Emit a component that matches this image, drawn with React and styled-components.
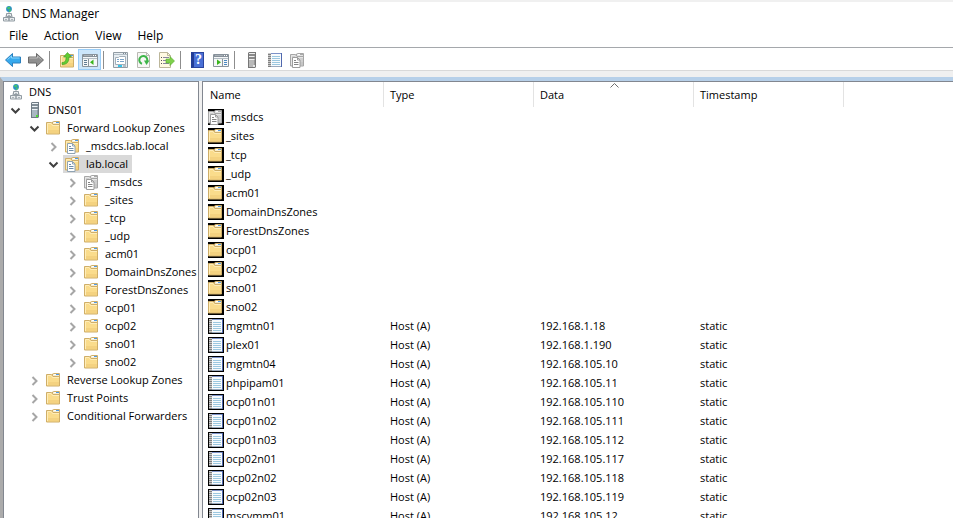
import React from "react";
import styled, { createGlobalStyle, css } from "styled-components";

const GlobalStyle = createGlobalStyle`
  * {
    box-sizing: border-box;
  }
  body {
    margin: 0;
    background: #fff;
    color: #000;
    font-family: "Open Sans", "Noto Sans", sans-serif;
    font-size: 11px;
    line-height: 16px;
  }
  button {
    margin: 0;
    padding: 0;
    border: 0;
    background: none;
    color: inherit;
    font: inherit;
  }
  svg {
    display: block;
    flex: none;
  }
`;

const Window = styled.div`
  display: flex;
  flex-direction: column;
  height: 100vh;
  overflow: hidden;
`;

const TitleBar = styled.header`
  display: flex;
  align-items: center;
  gap: 5px;
  height: 26px;
  padding-left: 1px;
  border-top: 2px solid #f0f0f0;
`;

const Title = styled.h1`
  margin: 0;
  font-size: 12px;
  font-weight: 400;
`;

const MenuBar = styled.nav`
  display: flex;
  height: 21px;
  padding-left: 1px;
  font-size: 12px;
`;

const MenuButton = styled.button`
  padding: 0 8px 2px;
`;

const ToolBar = styled.div`
  display: flex;
  align-items: center;
  height: 24px;
  padding: 1px 0 0 1px;
  border-top: 1px solid #a5a8ac;
  border-bottom: 1px solid #d9d9d9;
`;

const ToolButton = styled.button`
  display: flex;
  align-items: center;
  justify-content: center;
  width: 23px;
  height: 21px;
  ${({ $active }) =>
    $active &&
    css`
      border: 1px solid #99cdf8;
      background: #cce6fb;
    `}
`;

const Separator = styled.span`
  width: 1px;
  height: 18px;
  margin: 0 5px 0 2px;
  background: #8d8d8d;
`;

const Workspace = styled.div`
  flex: 1;
  min-height: 0;
  display: flex;
  flex-direction: column;
  padding-top: 6px;
  background: #f0f0f0;
`;

const Panes = styled.main`
  flex: 1;
  min-height: 0;
  display: grid;
  grid-template-columns: 196px 1fr;
  column-gap: 3px;
  border-top: 4px solid #b7d0e9;
  border-left: 3px solid #ababab;
`;

const Pane = styled.section`
  min-width: 0;
  overflow: hidden;
  border: 1px solid #828790;
  border-width: 1px 0 0 1px;
  background: #fff;
`;

const TreePane = styled(Pane)`
  padding-top: 1px;
  border-right-width: 1px;
`;

const Tree = styled.ul`
  margin: 0;
  padding: 0;
  list-style: none;
`;

const TreeRow = styled.div`
  display: flex;
  height: 18px;
  padding-left: ${({ $level }) => ($level ? $level * 19 - 15 : 2)}px;
`;

const Toggle = styled.button`
  display: flex;
  flex: none;
  align-items: center;
  width: 17px;
`;

const TreeItem = styled.button`
  display: flex;
  flex: none;
  align-items: center;
  gap: 5px;
  padding: 0 4px 0 2px;
  white-space: nowrap;
  background: ${({ $selected }) => ($selected ? "#d9d9d9" : "none")};
`;

const RecordTable = styled.table`
  width: 100%;
  table-layout: fixed;
  border-collapse: separate;
  border-spacing: 0;
`;

const HeadCell = styled.th`
  position: relative;
  width: ${({ $width }) => ($width ? `${$width}px` : "auto")};
  height: 25px;
  padding: 0 6px;
  border-right: ${({ $width }) => ($width ? "1px solid #e3e3e3" : "0")};
  font-weight: 400;
  text-align: left;

  &:first-child {
    padding-left: 7px;
  }
`;

const SortMark = styled.svg`
  position: absolute;
  top: 1px;
  left: calc(50% - 4px);
`;

const Cell = styled.td`
  height: 19px;
  padding: 0 6px;
  white-space: nowrap;

  &:first-child {
    padding-left: 5px;
  }
`;

const RecordName = styled.div`
  display: flex;
  align-items: center;
  gap: 2px;
`;

const IconTile = styled.span`
  width: 16px;
  height: 16px;
  background: #000;
`;

function Icon({ children }) {
  return (
    <svg width="16" height="16" viewBox="0 0 16 16" aria-hidden="true">
      {children}
    </svg>
  );
}

function DnsIcon() {
  return (
    <Icon>
      <path d="M8 6v3M5 11V9.500h6V11" fill="none" stroke="#9aa3a8" />
      <circle cx="8" cy="3" r="2.9" fill="#2a8fc4" />
      <path d="M6 1.500 8.500.5l1 1.500L8 3.500 6.500 3zM8 4l2.400-.8-.8 2L8 6z" fill="#46c46a" />
      <path d="M5.500 7.500h5v3h-5z" fill="#e8ebed" stroke="#929ca3" />
      <path d="M2.500 11.500H8V15H2.500zM8 11.500h5.500V15H8z" fill="#e8ebed" stroke="#929ca3" />
      <path d="M4 13.500h2M10 13.500h2M7 9.500h2" stroke="#a9b2b8" />
    </Icon>
  );
}

function ServerIcon({ gray }) {
  return (
    <Icon>
      <path d="M4 1 5 0h7v15l-1 1H4z" fill={gray ? "#777" : "#6f7b84"} />
      <path d="M5 1h5.500v14H5z" fill={gray ? "#b9b9b9" : "#a9b8c2"} />
      <path d="M5 1.500h6M5 4.500h5.500M5 7.500h5.500" stroke={gray ? "#eee" : "#edf3f6"} />
      <path d="M5 3h5.500M5 6h5.500" stroke={gray ? "#5a5a5a" : "#59636a"} />
      <path d="M9 13h2v2H9z" fill={gray ? "#e4e4e4" : "#4bdc2f"} />
    </Icon>
  );
}

function FolderShape({ gray }) {
  const edge = gray ? "#a6a6a6" : "#cfae68";
  return (
    <>
      <path d="M6.500 4V2l1-.5h6V5" fill={gray ? "#e4e4e4" : "#f5ecd0"} stroke={edge} />
      <path d="M8 2.500h2" stroke="#fff" />
      <path d="M10 2.500h3" stroke={gray ? "#aaa" : "#4f9be8"} />
      <path d="M.5 2.500h5l1.500 2h6.500v9.500H.5z" fill={gray ? "#cfcfcf" : "#fadc8c"} stroke={edge} />
      <path d="M1.500 13V3.500H5L6.500 5.500H13" fill="none" stroke={gray ? "#e6e6e6" : "#ffedb8"} />
      <path d="M2 10h11v3.500H2z" fill={gray ? "#bdbdbd" : "#eec873"} opacity=".5" />
    </>
  );
}

function FolderIcon() {
  return (
    <Icon>
      <FolderShape />
    </Icon>
  );
}

function ZoneIcon({ gray }) {
  const edge = gray ? "#9c9c9c" : "#8fa3b3";
  return (
    <Icon>
      <FolderShape gray={gray} />
      <path d="M2.500 5.500h5l2.500 2.500v7.500H2.500z" fill="#fff" stroke={edge} />
      <path d="M7.500 5.500V8H10" fill="none" stroke={edge} />
      <path d="M4 8.500h2M4 10.500h4.500M4 12.500h4.500" stroke={gray ? "#858585" : "#6d8dab"} />
    </Icon>
  );
}

function NotebookIcon() {
  return (
    <Icon>
      <path d="M3 1.500h11V15H3z" fill="#f8fbfd" />
      <path d="M3 1.500h11.500" stroke="#7d92c8" />
      <path d="M14.500 1v14" stroke="#5068ae" />
      <path d="M4 14.500h10" stroke="#9aa9bd" />
      <path d="M5 4.500h8M5 6.500h8M5 8.500h8M5 10.500h8M5 12.500h8" stroke="#9cc8e0" />
      <path d="M1 1h3v14H1z" fill="#c9c9c9" />
      <path d="M1 2.500h3M1 4.500h3M1 6.500h3M1 8.500h3M1 10.500h3M1 12.500h3M1 14.500h3" stroke="#808080" />
    </Icon>
  );
}

function ArrowIcon({ forward }) {
  const fill = forward ? "#8f8f8f" : "#36a9ed";
  const edge = forward ? "#6b6b6b" : "#2b7fbd";
  return (
    <Icon>
      <g transform={forward ? "matrix(-1 0 0 1 16 0)" : undefined}>
        <path d="M.5 8 7.500 1.500V5h8v6h-8v3.500z" fill={fill} stroke={edge} />
        <path d="M2.500 7.500 6.500 4v2h8" fill="none" stroke={forward ? "#bcbcbc" : "#8ad8ff"} />
      </g>
    </Icon>
  );
}

function FolderUpIcon() {
  return (
    <Icon>
      <g transform="translate(1 1)">
        <FolderShape />
      </g>
      <path d="M3 10.500c3 0 4-1.500 4-5.500H4.500L8.500.5l4 4.500H10c0 5-2 7.500-7 7.500z" fill="#62cc33" stroke="#3c9a22" strokeWidth=".6" />
    </Icon>
  );
}

function PaneIcon({ play }) {
  return (
    <Icon>
      <path d="M.5 2.500h15v12H.5z" fill="#f5f7f8" stroke="#8a949c" />
      <path d="M1 2h14v3H1z" fill="#87919a" />
      <path d="M2 3.500h8" stroke="#a9b1b8" />
      <path d="M11 3.500h1M13 3.500h1" stroke="#fff" />
      <path d="M1 6.500h14" stroke="#b3bcc4" />
      {play ? (
        <>
          <path d="M9.500 7v7" stroke="#8a949c" />
          <path d="M4 7.500v5.500L8 10.200z" fill="#3ab51c" />
          <path d="M11 8.500h3M11 10.500h3M11 12.500h3" stroke="#4987c1" />
        </>
      ) : (
        <>
          <path d="M6.500 7v7" stroke="#8a949c" />
          <path d="M2 8.500h3M2 10.500h3M2 12.500h3" stroke="#607b93" />
          <path d="M11.500 7.500V13L8 10.200z" fill="#3ab51c" />
        </>
      )}
    </Icon>
  );
}

function PropertiesIcon() {
  return (
    <Icon>
      <path d="M.5.5h14v15H.5z" fill="#e8eef2" stroke="#929ca4" />
      <path d="M1 2.500h13" stroke="#b3bec6" />
      <path d="M10 1.500h1M12 1.500h1" stroke="#7c8790" />
      <path d="M2.500 5.500h3l1-1h6v8h-10z" fill="#fff" stroke="#a3afb9" />
      <path d="M4 7.500h2M7 7.500h4M4 9.500h2M7 9.500h4" stroke="#7ba4c9" />
      <path d="M5 14h4" stroke="#35c3ea" strokeWidth="2" />
      <path d="M10 14h3" stroke="#b4bfc7" strokeWidth="2" />
    </Icon>
  );
}

function RefreshIcon() {
  return (
    <Icon>
      <path d="M1.500.5h9l3 3v12h-12z" fill="#f7f7f5" stroke="#b9b9b3" />
      <path d="M10.500.5v3h3" fill="none" stroke="#b9b9b3" />
      <path d="M6 11.800A4 4 0 1 1 11 9.500" fill="none" stroke="#3db548" strokeWidth="2" />
      <path d="M8 8.500h5.500L10.500 13z" fill="#3db548" />
    </Icon>
  );
}

function ExportIcon() {
  return (
    <Icon>
      <path d="M.5.5h8l3 3v12H.5z" fill="#fffae3" stroke="#bcb69a" />
      <path d="M8.500.5v3h3" fill="none" stroke="#bcb69a" />
      <path d="M2 5.500h1M2 8.500h1M2 11.500h1" stroke="#555" />
      <path d="M4 5.500h6M4 8.500h4M4 11.500h6" stroke="#8a86a0" />
      <path d="M7 7h4V4.500L15.500 9 11 13.500V11H7z" fill="#7ed04b" stroke="#56ad2e" strokeWidth=".6" />
    </Icon>
  );
}

const HelpBadge = styled.span`
  width: 13px;
  height: 16px;
  border: 1px solid #2a459f;
  border-left: 3px solid #233d96;
  background: #4a70d6;
  color: #fff;
  font-family: "Liberation Serif", serif;
  font-size: 14px;
  font-weight: 700;
  line-height: 14px;
`;

function ChevronIcon({ open }) {
  return (
    <Icon>
      {open ? (
        <path d="M3.500 6.500l4 4 4-4" fill="none" stroke="#404040" strokeWidth="2" />
      ) : (
        <path d="M5.500 5l4 4-4 4" fill="none" stroke="#a6a6a6" strokeWidth="2" />
      )}
    </Icon>
  );
}

const tools = [
  { label: "Back", icon: <ArrowIcon /> },
  { label: "Forward", icon: <ArrowIcon forward /> },
  null,
  { label: "Up one level", icon: <FolderUpIcon /> },
  { label: "Show/Hide Console Tree", icon: <PaneIcon />, active: true },
  null,
  { label: "Properties", icon: <PropertiesIcon /> },
  { label: "Refresh", icon: <RefreshIcon /> },
  { label: "Export List", icon: <ExportIcon /> },
  null,
  { label: "Help", icon: <HelpBadge>?</HelpBadge> },
  { label: "Show/Hide Action Pane", icon: <PaneIcon play /> },
  null,
  { label: "New Server", icon: <ServerIcon gray /> },
  { label: "New Record", icon: <NotebookIcon /> },
  { label: "New Zone", icon: <ZoneIcon gray /> },
];

const subdomains = [
  "_sites",
  "_tcp",
  "_udp",
  "acm01",
  "DomainDnsZones",
  "ForestDnsZones",
  "ocp01",
  "ocp02",
  "sno01",
  "sno02",
];

const tree = {
  name: "DNS",
  icon: <DnsIcon />,
  children: [
    {
      name: "DNS01",
      icon: <ServerIcon />,
      children: [
        {
          name: "Forward Lookup Zones",
          children: [
            { name: "_msdcs.lab.local", icon: <ZoneIcon /> },
            {
              name: "lab.local",
              icon: <ZoneIcon />,
              selected: true,
              children: [
                { name: "_msdcs", icon: <ZoneIcon gray /> },
                ...subdomains.map((name) => ({ name })),
              ],
            },
          ],
        },
        { name: "Reverse Lookup Zones" },
        { name: "Trust Points" },
        { name: "Conditional Forwarders" },
      ],
    },
  ],
};

const hosts = [
  ["mgmtn01", "192.168.1.18"],
  ["plex01", "192.168.1.190"],
  ["mgmtn04", "192.168.105.10"],
  ["phpipam01", "192.168.105.11"],
  ["ocp01n01", "192.168.105.110"],
  ["ocp01n02", "192.168.105.111"],
  ["ocp01n03", "192.168.105.112"],
  ["ocp02n01", "192.168.105.117"],
  ["ocp02n02", "192.168.105.118"],
  ["ocp02n03", "192.168.105.119"],
  ["mscvmm01", "192.168.105.12"],
];

const records = [
  { name: "_msdcs", icon: <ZoneIcon gray /> },
  ...subdomains.map((name) => ({ name, icon: <FolderIcon /> })),
  ...hosts.map(([name, data]) => ({
    name,
    data,
    type: "Host (A)",
    timestamp: "static",
    icon: <NotebookIcon />,
  })),
];

function TreeNode({ node, level = 0 }) {
  return (
    <li>
      <TreeRow $level={level}>
        {level > 0 && (
          <Toggle aria-label={`Toggle ${node.name}`} aria-expanded={!!node.children}>
            <ChevronIcon open={!!node.children} />
          </Toggle>
        )}
        <TreeItem $selected={node.selected}>
          {node.icon || <FolderIcon />}
          {node.name}
        </TreeItem>
      </TreeRow>
      {node.children && (
        <Tree>
          {node.children.map((child) => (
            <TreeNode key={child.name} node={child} level={level + 1} />
          ))}
        </Tree>
      )}
    </li>
  );
}

export default function App() {
  return (
    <Window>
      <GlobalStyle />
      <TitleBar>
        <DnsIcon />
        <Title>DNS Manager</Title>
      </TitleBar>
      <MenuBar>
        {["File", "Action", "View", "Help"].map((item) => (
          <MenuButton key={item}>{item}</MenuButton>
        ))}
      </MenuBar>
      <ToolBar>
        {tools.map((tool, i) =>
          tool ? (
            <ToolButton key={tool.label} aria-label={tool.label} $active={tool.active}>
              {tool.icon}
            </ToolButton>
          ) : (
            <Separator key={i} />
          )
        )}
      </ToolBar>
      <Workspace>
        <Panes>
          <TreePane>
            <Tree>
              <TreeNode node={tree} />
            </Tree>
          </TreePane>
          <Pane>
            <RecordTable>
              <thead>
                <tr>
                  <HeadCell $width={181}>Name</HeadCell>
                  <HeadCell $width={150}>Type</HeadCell>
                  <HeadCell $width={160} aria-sort="ascending">
                    Data
                    <SortMark width="9" height="5" viewBox="0 0 9 5" aria-hidden="true">
                      <path d="M.5 4.500l4-4 4 4" fill="none" stroke="#6d6d6d" />
                    </SortMark>
                  </HeadCell>
                  <HeadCell $width={150}>Timestamp</HeadCell>
                  <HeadCell />
                </tr>
              </thead>
              <tbody>
                {records.map((record) => (
                  <tr key={record.name}>
                    <Cell>
                      <RecordName>
                        <IconTile>{record.icon}</IconTile>
                        {record.name}
                      </RecordName>
                    </Cell>
                    <Cell>{record.type}</Cell>
                    <Cell>{record.data}</Cell>
                    <Cell>{record.timestamp}</Cell>
                    <Cell />
                  </tr>
                ))}
              </tbody>
            </RecordTable>
          </Pane>
        </Panes>
      </Workspace>
    </Window>
  );
}
